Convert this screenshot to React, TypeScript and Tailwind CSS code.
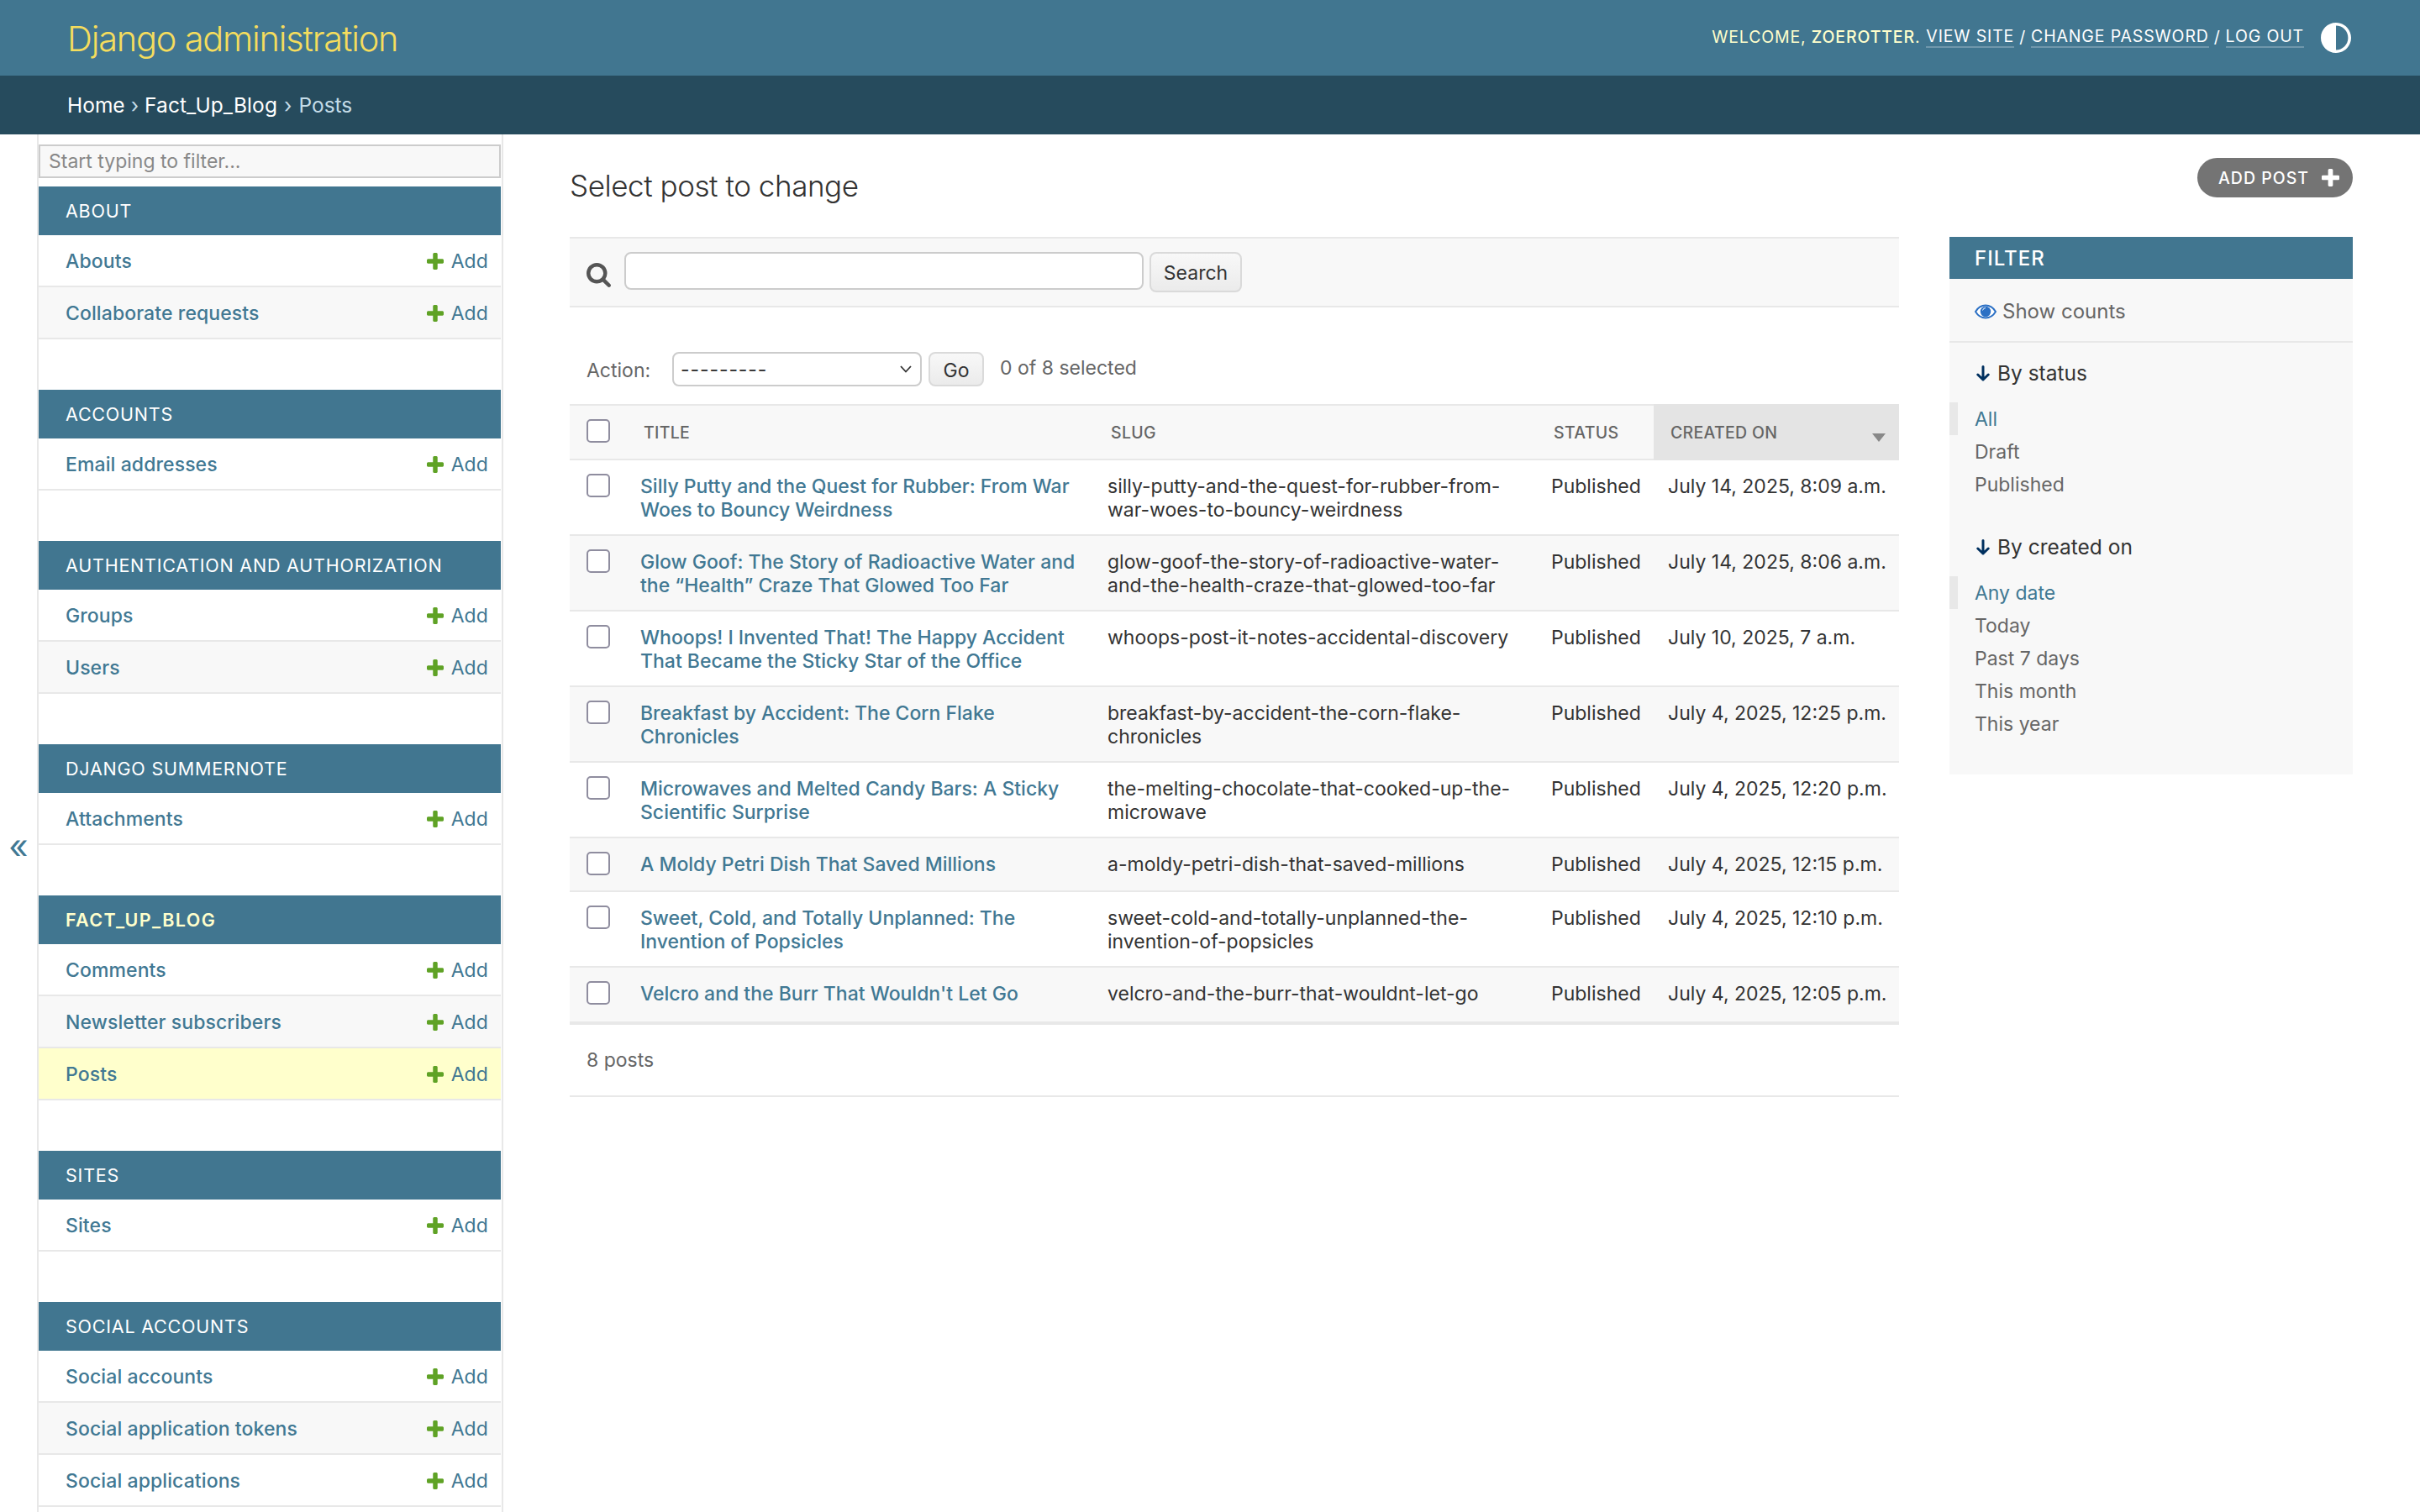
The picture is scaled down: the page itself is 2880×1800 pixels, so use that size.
import React from "react";

const PLUS = "M1600 736v192q0 40-28 68t-68 28h-416v416q0 40-28 68t-68 28h-192q-40 0-68-28t-28-68v-416h-416q-40 0-68-28t-28-68v-192q0-40 28-68t68-28h416v-416q0-40 28-68t68-28h192q40 0 68 28t28 68v416h416q40 0 68 28t28 68z";
const SEARCH = "M1216 832q0-185-131.5-316.5t-316.5-131.5-316.5 131.5-131.5 316.5 131.5 316.5 316.5 131.5 316.5-131.5 131.5-316.5zm512 832q0 52-38 90t-90 38q-54 0-90-38l-343-342q-179 124-399 124-143 0-273.5-55.5t-225-150-150-225-55.5-273.5 55.5-273.5 150-225 225-150 273.5-55.5 273.5 55.5 225 150 150 225 55.5 273.5q0 220-124 399l343 343q37 37 37 90z";

const sections: { name: string; current?: boolean; rows: { label: string; active?: boolean }[] }[] = [
  { name: "About", rows: [{ label: "Abouts" }, { label: "Collaborate requests" }] },
  { name: "Accounts", rows: [{ label: "Email addresses" }] },
  { name: "Authentication and Authorization", rows: [{ label: "Groups" }, { label: "Users" }] },
  { name: "Django Summernote", rows: [{ label: "Attachments" }] },
  { name: "Fact_Up_Blog", current: true, rows: [{ label: "Comments" }, { label: "Newsletter subscribers" }, { label: "Posts", active: true }] },
  { name: "Sites", rows: [{ label: "Sites" }] },
  { name: "Social Accounts", rows: [{ label: "Social accounts" }, { label: "Social application tokens" }, { label: "Social applications" }] },
];

const posts: { title: string[]; slug: string[]; date: string }[] = [
  { title: ["Silly Putty and the Quest for Rubber: From War", "Woes to Bouncy Weirdness"], slug: ["silly-putty-and-the-quest-for-rubber-from-", "war-woes-to-bouncy-weirdness"], date: "July 14, 2025, 8:09 a.m." },
  { title: ["Glow Goof: The Story of Radioactive Water and", "the “Health” Craze That Glowed Too Far"], slug: ["glow-goof-the-story-of-radioactive-water-", "and-the-health-craze-that-glowed-too-far"], date: "July 14, 2025, 8:06 a.m." },
  { title: ["Whoops! I Invented That! The Happy Accident", "That Became the Sticky Star of the Office"], slug: ["whoops-post-it-notes-accidental-discovery"], date: "July 10, 2025, 7 a.m." },
  { title: ["Breakfast by Accident: The Corn Flake", "Chronicles"], slug: ["breakfast-by-accident-the-corn-flake-", "chronicles"], date: "July 4, 2025, 12:25 p.m." },
  { title: ["Microwaves and Melted Candy Bars: A Sticky", "Scientific Surprise"], slug: ["the-melting-chocolate-that-cooked-up-the-", "microwave"], date: "July 4, 2025, 12:20 p.m." },
  { title: ["A Moldy Petri Dish That Saved Millions"], slug: ["a-moldy-petri-dish-that-saved-millions"], date: "July 4, 2025, 12:15 p.m." },
  { title: ["Sweet, Cold, and Totally Unplanned: The", "Invention of Popsicles"], slug: ["sweet-cold-and-totally-unplanned-the-", "invention-of-popsicles"], date: "July 4, 2025, 12:10 p.m." },
  { title: ["Velcro and the Burr That Wouldn't Let Go"], slug: ["velcro-and-the-burr-that-wouldnt-let-go"], date: "July 4, 2025, 12:05 p.m." },
];

function Lines({ lines }: { lines: string[] }) {
  return (
    <>
      {lines.map((l, i) => (
        <React.Fragment key={l}>
          {i > 0 && <br />}
          {l}
        </React.Fragment>
      ))}
    </>
  );
}

function Check() {
  return (
    <input
      type="checkbox"
      className="block appearance-none w-[28px] h-[28px] rounded-[5px] border-2 border-[#8f8d9f] bg-white"
    />
  );
}

function ArrowDown() {
  return (
    <svg viewBox="0 0 16 19" className="w-[16px] h-[19px] shrink-0" fill="none" stroke="#00305f" strokeWidth="3" strokeLinecap="round" strokeLinejoin="round">
      <path d="M8 1.500V17M1.800 11 8 17l6.200-6" />
    </svg>
  );
}

function NavSection({ name, current, rows }: (typeof sections)[number]) {
  return (
    <div className="mb-[60px]">
      <div className={`h-[58px] flex items-center pl-[32px] bg-[#417690] text-[21.5px] uppercase ${current ? "text-[#ffc] font-semibold tracking-[1.4px]" : "text-white tracking-[0.78px]"}`}>
        {name}
      </div>
      {rows.map((r, i) => (
        <div
          key={r.label}
          className={`h-[62px] flex items-center justify-between pl-[32px] pr-[15px] pt-[2px] border-b-2 border-[#e8e8e8] text-[#417893] font-medium tracking-[0.1px] ${r.active ? "bg-[#ffc]" : i % 2 ? "bg-[#f8f8f8]" : "bg-white"}`}
        >
          <span>{r.label}</span>
          <span className="flex items-center gap-[9px] font-normal">
            <svg viewBox="192 128 1408 1408" className="w-[20px] h-[20px]" fill="#5fa225">
              <path d={PLUS} />
            </svg>
            Add
          </span>
        </div>
      ))}
    </div>
  );
}

function TH({ children, sorted, inset }: { children?: React.ReactNode; sorted?: boolean; inset?: boolean }) {
  return (
    <th className={`relative h-[67px] border-y-2 text-left font-medium text-[19.5px] tracking-[0.3px] uppercase text-[#666] ${inset ? "pl-[22px]" : "pl-[20px]"} ${sorted ? "bg-[#e4e4e4] border-[#e4e4e4]" : "bg-[#f8f8f8] border-[#e8e8e8]"}`}>
      {children}
      {sorted && (
        <svg viewBox="0 0 16 10" className="absolute left-[260px] top-[33px] w-[16px] h-[10px]" fill="#888">
          <path d="M0 0h16L8 10z" />
        </svg>
      )}
    </th>
  );
}

function FilterGroup({ title, items }: { title: string; items: string[] }) {
  return (
    <div className="mb-[41px]">
      <div className="flex items-center gap-[9px] pl-[32px] h-[28px] text-[24.5px] text-[#333] mb-[21px]">
        <ArrowDown />
        {title}
      </div>
      {items.map((it, i) => (
        <div
          key={it}
          className={`h-[39px] flex items-center pl-[20px] ${i === 0 ? "border-l-[10px] border-[#e8e8e8] text-[#417893]" : "ml-[10px] text-[#666]"}`}
        >
          {it}
        </div>
      ))}
    </div>
  );
}

export default function App() {
  return (
    <div className="h-screen overflow-hidden flex flex-col bg-white font-[Inter,sans-serif] text-[23px] leading-[28px] text-[#333]">
      <header className="h-[90px] shrink-0 bg-[#417690] flex items-center justify-between pl-[80px] pr-[82px]">
        <h1 className="mt-[2px] text-[41.5px] leading-[52px] font-light text-[#f5dd5d] tracking-[-1.2px]">Django administration</h1>
        <div className="flex items-center text-[19.5px] uppercase tracking-[0.85px] text-[#ffc]">
          <span className="-mt-[2px]">
            Welcome, <span className="font-medium">zoerotter</span>.{" "}
          </span>
          <a className="ml-[7px] -mt-[2px] text-white border-b-2 border-white/25 leading-[24px]">View site</a>
          <span className="mx-[6px] -mt-[2px] text-white">/</span>
          <a className="-mt-[2px] text-white border-b-2 border-white/25 leading-[24px]">Change password</a>
          <span className="mx-[6px] -mt-[2px] text-white">/</span>
          <a className="-mt-[2px] text-white border-b-2 border-white/25 leading-[24px]">Log out</a>
          <svg viewBox="2 2 20 20" className="ml-[20px] w-[36px] h-[36px] -scale-x-100" fill="#fff">
            <path d="M12 22C6.477 22 2 17.523 2 12S6.477 2 12 2s10 4.477 10 10-4.477 10-10 10zm0-2V4a8 8 0 1 0 0 16z" />
          </svg>
        </div>
      </header>

      <nav className="h-[70px] shrink-0 bg-[#264b5d] flex items-center pl-[80px] text-[24.5px] text-[#c4dce8] font-normal">
        <a className="text-white">Home</a>
        <span className="mx-[7px]">›</span>
        <a className="text-white tracking-[0.1px]">Fact_Up_Blog</a>
        <span className="mx-[8px]">›</span>
        <span>Posts</span>
      </nav>

      <main className="flex flex-1 min-h-0">
        <div className="w-[44px] shrink-0 pt-[824px] text-center text-[40px] leading-[48px] text-[#417893]">«</div>

        <aside className="w-[555px] shrink-0 border-x-2 border-[#e8e8e8] pt-[12px] pr-[1px] overflow-hidden">
          <input
            placeholder="Start typing to filter..."
            className="block w-full h-[40px] mb-[10px] bg-[#f8f8f8] border-2 border-[#ccc] px-[10px] text-[23px] text-[#333] placeholder:text-[#888] outline-none"
          />
          {sections.map((s) => (
            <NavSection key={s.name} {...s} />
          ))}
        </aside>

        <div className="flex-1 min-w-0 pl-[79px] pr-[80px]">
          <div className="h-[122px] flex justify-between items-start">
            <h2 className="mt-[37px] text-[35px] leading-[48px] font-light text-[#333] tracking-[-0.45px]">Select post to change</h2>
            <a className="mt-[28px] h-[47px] pl-[25px] pr-[16px] rounded-full bg-[#747474] text-white text-[19.5px] uppercase tracking-[1px] flex items-center gap-[15px] font-medium">
              Add post
              <svg viewBox="192 128 1408 1408" className="w-[21px] h-[21px]" fill="#fff">
                <path d={PLUS} />
              </svg>
            </a>
          </div>

          <div className="flex gap-[60px] items-start">
            <section className="w-[1582px] shrink-0">
              <div className="h-[84px] bg-[#f8f8f8] border-y-2 border-[#e8e8e8] flex items-start pl-[20px] pt-[16px]">
                <svg viewBox="64 128 1664 1664" className="w-[29px] h-[29px] mt-[13px] mr-[16px]" fill="#555">
                  <path d={SEARCH} />
                </svg>
                <input className="block w-[618px] h-[45px] bg-white border-2 border-[#ccc] rounded-[8px] outline-none" />
                <button className="ml-[7px] w-[110px] h-[48px] pt-[2px] rounded-[8px] border-2 border-[#dadada] bg-gradient-to-b from-[#f8f8f8] to-[#ebebeb] text-[#333]">Search</button>
              </div>

              <div className="h-[115px] flex items-start pl-[20px] pt-[53px]">
                <span className="w-[102px] h-[43px] flex items-center text-[#666]">Action:</span>
                <div className="relative w-[297px] h-[41px]">
                  <select className="block appearance-none w-full h-full bg-white border-2 border-[#ccc] rounded-[8px] pl-[8px] text-[#333] outline-none tracking-[0.9px]">
                    <option>---------</option>
                  </select>
                  <svg viewBox="0 0 14 9" className="absolute right-[12px] top-[16px] w-[14px] h-[9px]" fill="none" stroke="#333" strokeWidth="1.8">
                    <path d="M1 1l6 6.500L13 1" />
                  </svg>
                </div>
                <button className="ml-[8px] w-[66px] h-[41px] pt-[2px] rounded-[8px] border-2 border-[#dadada] bg-gradient-to-b from-[#f8f8f8] to-[#ebebeb] text-[#333]">Go</button>
                <span className="ml-[19px] h-[38px] flex items-center text-[#666]">0 of 8 selected</span>
              </div>

              <table className="w-[1582px] table-fixed border-separate border-spacing-0">
                <colgroup>
                  <col className="w-[66px]" />
                  <col className="w-[556px]" />
                  <col className="w-[529px]" />
                  <col className="w-[139px]" />
                  <col className="w-[292px]" />
                </colgroup>
                <thead>
                  <tr>
                    <th className="h-[67px] border-y-2 border-[#e8e8e8] bg-[#f8f8f8] pl-[20px] align-top pt-[16px]">
                      <Check />
                    </th>
                    <TH inset>Title</TH>
                    <TH inset>Slug</TH>
                    <TH>Status</TH>
                    <TH sorted>Created on</TH>
                  </tr>
                </thead>
                <tbody>
                  {posts.map((p, i) => {
                    const bg = i % 2 ? "bg-[#f8f8f8]" : "bg-white";
                    const last = i === posts.length - 1;
                    const td = `align-top pt-[17px] pl-[18px] border-[#e8e8e8] whitespace-nowrap ${bg} ${last ? "border-b-4 pb-[17px]" : "border-b-2 pb-[15px]"}`;
                    return (
                      <tr key={p.date}>
                        <td className={`${td} !pt-[16px] !pl-[20px]`}>
                          <div className="h-[31px]">
                            <Check />
                          </div>
                        </td>
                        <td className={`${td} text-[#417893] font-medium`}>
                          <Lines lines={p.title} />
                        </td>
                        <td className={td}>
                          <Lines lines={p.slug} />
                        </td>
                        <td className={`${td} !pl-[17px]`}>Published</td>
                        <td className={`${td} !pl-[17px]`}>{p.date}</td>
                      </tr>
                    );
                  })}
                </tbody>
              </table>

              <div className="h-[86px] pl-[20px] flex items-center text-[#666] border-b-2 border-[#e8e8e8]">8 posts</div>
            </section>

            <aside className="w-[480px] shrink-0 bg-[#f8f8f8] h-[640px]">
              <div className="h-[50px] pt-[2px] bg-[#417690] flex items-center pl-[30px] text-white uppercase tracking-[1px] font-medium text-[24px]">Filter</div>
              <div className="h-[76px] flex items-center gap-[7px] pl-[30px] pt-[3px] border-b-2 border-[#e8e8e8] text-[24px] text-[#666]">
                <svg viewBox="0 0 26 18" className="w-[26px] h-[18px]">
                  <path d="M1 9c3-5 7.500-7.500 12-7.500S22 4 25 9c-3 5-7.500 7.500-12 7.500S4 14 1 9z" fill="#fff" stroke="#2a6fc4" strokeWidth="2" />
                  <circle cx="13" cy="9" r="6.200" fill="#2a6fc4" />
                  <path d="M9.500 7.500A4 4 0 0 1 13 4.500" fill="none" stroke="#fff" strokeWidth="1" />
                </svg>
                Show counts
              </div>
              <div className="pt-[22px]">
                <FilterGroup title="By status" items={["All", "Draft", "Published"]} />
                <FilterGroup title="By created on" items={["Any date", "Today", "Past 7 days", "This month", "This year"]} />
              </div>
            </aside>
          </div>
        </div>
      </main>
    </div>
  );
}
